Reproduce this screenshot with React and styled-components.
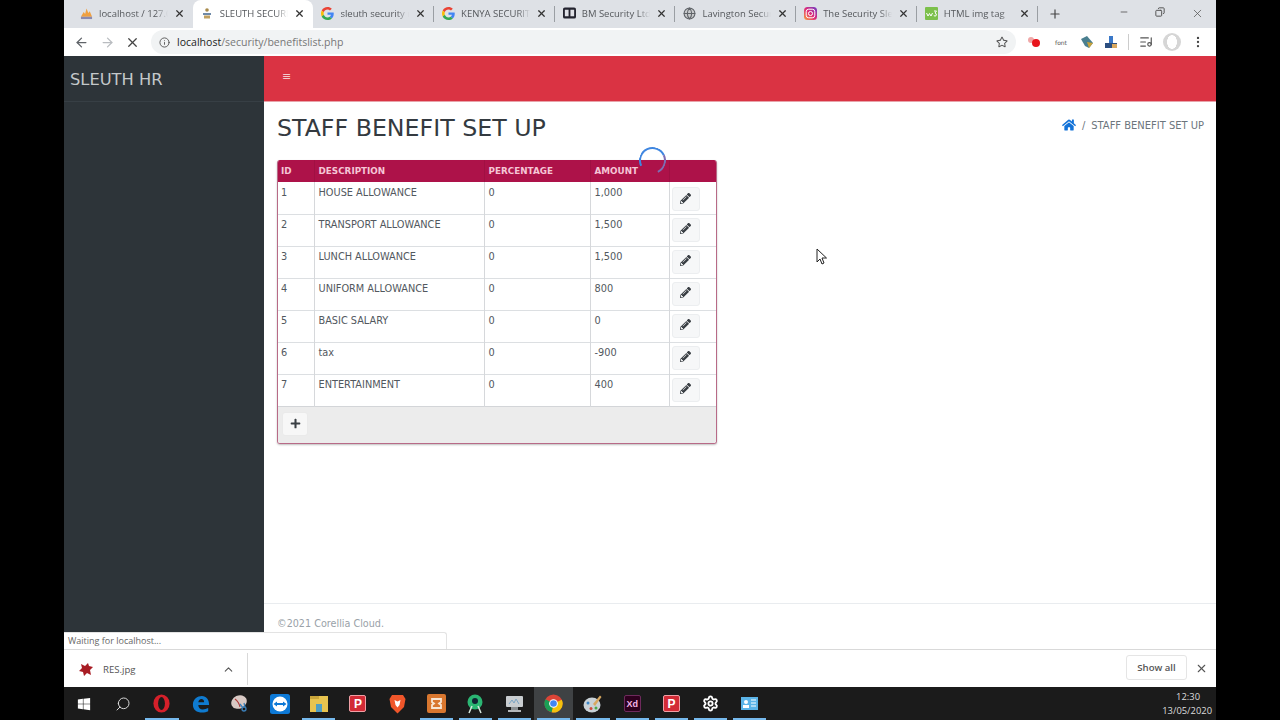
import React from "react";
import styled, { createGlobalStyle } from "styled-components";
import { FaHome, FaPencilAlt, FaPlus, FaRegStar, FaWindows } from "react-icons/fa";
import { ArrowLeft, ArrowRight, X, Info, Search, ChevronUp, Settings, MoreVertical, Plus, Minus, Copy, ListMusic, Globe } from "lucide-react";

const Global = createGlobalStyle`
  html, body { margin: 0; padding: 0; background: #000; }
  * { box-sizing: border-box; }
`;

const Stage = styled.div`
  width: 1280px;
  height: 720px;
  padding: 0 64px;
  background: #000;
  overflow: hidden;
`;
const Screen = styled.div`
  position: relative;
  width: 1152px;
  height: 720px;
  display: flex;
  flex-direction: column;
  background: #fff;
  font-family: "DejaVu Sans", sans-serif;
`;

/* browser chrome */
const TabStrip = styled.div`
  height: 28px;
  flex: none;
  display: flex;
  align-items: stretch;
  padding-left: 8px;
  background: #dee1e6;
  font-family: "Open Sans", sans-serif;
`;
const Tab = styled.div`
  width: 120.7px;
  flex: none;
  display: flex;
  align-items: center;
  gap: 6px;
  padding: 0 8px 2px 8px;
  border-radius: 8px 8px 0 0;
  background: ${(p) => (p.$active ? "#fff" : "transparent")};
  position: relative;
  &::after {
    content: "";
    display: ${(p) => (p.$sep ? "block" : "none")};
    position: absolute;
    right: 0;
    top: 6px;
    height: 16px;
    width: 1px;
    background: #9a9ea3;
  }
`;
const Favicon = styled.span`
  width: 13px;
  height: 13px;
  flex: none;
  display: flex;
  align-items: center;
  justify-content: center;
`;
const TabTitle = styled.span`
  flex: 1;
  min-width: 0;
  overflow: hidden;
  white-space: nowrap;
  font-size: 9.5px;
  color: #55585c;
  -webkit-mask-image: linear-gradient(90deg, #000 82%, transparent 100%);
  mask-image: linear-gradient(90deg, #000 82%, transparent 100%);
`;
const TabClose = styled(X)`
  flex: none;
  width: 11px;
  height: 11px;
  color: #333;
  stroke-width: 2.6;
`;
const NewTab = styled.div`
  width: 20px;
  margin-left: 7px;
  display: flex;
  align-items: center;
  justify-content: center;
  color: #444;
`;
const WindowControls = styled.div`
  margin-left: auto;
  display: flex;
  align-items: flex-start;
  padding-top: 7px;
  padding-right: 12px;
  gap: 26px;
  color: #555;
`;
const Toolbar = styled.div`
  height: 28px;
  flex: none;
  display: flex;
  align-items: center;
  padding: 0 10px 0 5px;
  background: #fff;
  color: #5f6368;
`;
const NavButton = styled.div`
  width: 25.5px;
  flex: none;
  display: flex;
  align-items: center;
  justify-content: center;
  color: ${(p) => p.$color || "#5f6368"};
`;
const Omnibox = styled.div`
  width: 865px;
  height: 24px;
  margin-left: 5.5px;
  display: flex;
  align-items: center;
  gap: 7px;
  padding: 0 8px;
  border-radius: 12px;
  background: #f1f3f4;
  font-family: "Open Sans", sans-serif;
  font-size: 10.55px;
  color: #777;
`;
const Url = styled.span`
  flex: 1;
  b { font-weight: 400; color: #222; }
`;
const Extensions = styled.div`
  flex: 1;
  display: flex;
  align-items: center;
  gap: 10px;
  padding: 0 0 0 11px;
`;
const FontExt = styled.span`
  width: 12px;
  margin: 0 3px;
  text-align: center;
  font-size: 6px;
  color: #555;
`;
const Divider = styled.span`
  width: 1px;
  height: 16px;
  background: #ccc;
`;
const Avatar = styled.span`
  width: 18px;
  height: 18px;
  border-radius: 50%;
  background: radial-gradient(ellipse 5px 7px at 50% 50%, #fff 95%, #d6d6d6 100%);
`;

/* page */
const Page = styled.div`
  flex: 1;
  min-height: 0;
  display: grid;
  grid-template-columns: 200px 1fr;
`;
const Sidebar = styled.aside`
  background: #2d3439;
`;
const Brand = styled.div`
  height: 46px;
  padding: 1px 0 0 6px;
  display: flex;
  align-items: center;
  font-size: 16.3px;
  color: #c4c8ca;
  border-bottom: 1px solid #373f45;
`;
const Main = styled.main`
  display: flex;
  flex-direction: column;
  min-width: 0;
`;
const TopBar = styled.div`
  height: 46px;
  flex: none;
  padding: 13px 0 0 18px;
  background: #da3343;
  color: #f3c9cd;
  border-bottom: 1px solid #e8a3aa;
  font-size: 11px;
  line-height: 16px;
`;
const Content = styled.div`
  flex: 1;
  padding: 0 12px 0 13px;
`;
const TitleRow = styled.div`
  height: 58px;
  display: flex;
  align-items: flex-start;
  justify-content: space-between;
`;
const Title = styled.h1`
  margin: 12px 0 0;
  font-size: 23.7px;
  font-weight: 400;
  line-height: 29px;
  color: #343a40;
`;
const Crumbs = styled.div`
  margin-top: 16px;
  display: flex;
  align-items: center;
  gap: 6px;
  font-size: 9.95px;
  color: #6c757d;
  svg { color: #1272d8; font-size: 14px; }
`;
const Card = styled.div`
  width: 440px;
  border: 1px solid #b86a87;
  border-top: none;
  border-radius: 3px;
  box-shadow: 0 1px 2px rgba(0, 0, 0, 0.25);
  overflow: hidden;
`;
const Table = styled.table`
  width: 100%;
  table-layout: fixed;
  border-collapse: collapse;
  font-size: 9.75px;
  color: #52585e;
`;
const Th = styled.th`
  height: 22px;
  padding: 0 3px 0 4px;
  background: #ad1249;
  color: #f5c6d6;
  font-size: 8.8px;
  font-weight: 700;
  text-align: left;
  border-right: 1px solid #a01043;
  &:first-child { padding-left: 3px; }
  &:last-child { border-right: none; }
`;
const Tr = styled.tr`
  height: 32px;
  border-bottom: 1px solid #dcdfe2;
  &:last-child { border-bottom: 1px solid #d3d5d8; }
`;
const Td = styled.td`
  padding: 4px 3px 0 4px;
  vertical-align: top;
  line-height: 12px;
  border-right: 1px solid #d6d8db;
  tr:first-child > & { padding-top: 5px; }
  &:first-child { padding-left: 3px; }
  &:last-child { border-right: none; padding: 3px 0 0 2px; }
`;
const EditButton = styled.div`
  width: 28px;
  height: 24px;
  display: flex;
  align-items: center;
  justify-content: center;
  padding-bottom: 2px;
  background: #f6f7f8;
  border: 1px solid #eceef0;
  border-radius: 3px;
  color: #3a3f44;
  font-size: 11px;
`;
const CardFooter = styled.div`
  height: 36px;
  padding: 5px 0 0 4px;
  background: #ececec;
`;
const AddButton = styled.div`
  width: 26px;
  height: 24px;
  display: flex;
  align-items: center;
  justify-content: center;
  background: #f7f7f7;
  border: 1px solid #eaeaea;
  border-radius: 3px;
  color: #3a3f44;
  font-size: 11px;
`;
const PageFooter = styled.footer`
  height: 46px;
  flex: none;
  padding: 13px 0 0 13px;
  border-top: 1px solid #e9ecef;
  font-size: 9.65px;
  line-height: 13px;
  color: #99a1a8;
`;
const Spinner = styled.div`
  position: absolute;
  left: 575px;
  top: 147px;
  width: 27px;
  height: 27px;
  border-radius: 50%;
  border: 2px solid transparent;
  border-top-color: #3f86e0;
  border-left-color: #3f86e0;
  border-right-color: #7d6fb4;
  transform: rotate(20deg);
`;
const Cursor = styled.svg`
  position: absolute;
  left: 752px;
  top: 248px;
`;
const StatusBubble = styled.div`
  position: absolute;
  left: 0;
  top: 632px;
  width: 383px;
  height: 17px;
  padding-left: 4px;
  background: #fff;
  border: 1px solid #e3e3e3;
  border-left: none;
  border-bottom: none;
  border-radius: 0 3px 0 0;
  font-family: "Open Sans", sans-serif;
  font-size: 9px;
  line-height: 16px;
  color: #666;
`;

/* download shelf */
const Shelf = styled.div`
  height: 38px;
  flex: none;
  display: flex;
  align-items: center;
  border-top: 1px solid #d9d9d9;
  background: #fff;
  font-family: "Open Sans", sans-serif;
`;
const Download = styled.div`
  width: 184px;
  height: 32px;
  display: flex;
  align-items: center;
  gap: 10px;
  padding: 1px 12px 0 15px;
  border-right: 1px solid #d9d9d9;
  font-size: 9.6px;
  color: #555;
`;
const FileName = styled.span`
  flex: 1;
`;
const ShowAll = styled.div`
  margin-left: auto;
  margin-top: -2px;
  width: 61px;
  height: 25px;
  display: flex;
  align-items: center;
  justify-content: center;
  border: 1px solid #e5e5e5;
  border-radius: 3px;
  font-size: 9.6px;
  font-weight: 600;
  color: #555;
`;
const ShelfClose = styled.div`
  width: 29px;
  display: flex;
  justify-content: center;
  color: #555;
`;

/* windows taskbar */
const Taskbar = styled.div`
  height: 33px;
  flex: none;
  display: flex;
  background: #1b1b1b;
`;
const Slot = styled.div`
  position: relative;
  width: 39.2px;
  flex: none;
  height: 33px;
  display: flex;
  align-items: center;
  justify-content: center;
  background: ${(p) => (p.$active ? "#3f4244" : "transparent")};
  &::after {
    content: "";
    display: ${(p) => (p.$running ? "block" : "none")};
    position: absolute;
    left: 3px;
    right: 3px;
    bottom: 0;
    height: 2px;
    background: #76b9ed;
  }
`;
const Clock = styled.div`
  margin-left: auto;
  padding: 3px 4px 0 0;
  font-family: "Open Sans", sans-serif;
  font-size: 9.4px;
  line-height: 14px;
  text-align: right;
  color: #dcdcdc;
  span { display: block; padding-right: 12px; }
`;
const LetterIcon = styled.span`
  width: 17px;
  height: 17px;
  display: flex;
  align-items: center;
  justify-content: center;
  border-radius: 2px;
  font-family: "Liberation Sans", sans-serif;
  font-size: ${(p) => p.$size || 11}px;
  font-weight: 700;
  color: ${(p) => p.$color};
  background: ${(p) => p.$bg};
  border: 1.5px solid ${(p) => p.$border || "transparent"};
`;

const GoogleG = () => (
  <svg width="13" height="13" viewBox="0 0 48 48">
    <path fill="#ea4335" d="M24 9.5c3.5 0 6.700 1.300 9.100 3.500l6.800-6.800C35.800 2.400 30.300 0 24 0 14.600 0 6.500 5.400 2.600 13.200l7.900 6.100C12.400 13.600 17.700 9.500 24 9.500z" />
    <path fill="#4285f4" d="M47 24.500c0-1.600-.2-3.100-.4-4.500H24v9h12.900c-.6 3-2.200 5.400-4.700 7.100l7.700 6C44.400 37.900 47 31.800 47 24.500z" />
    <path fill="#fbbc05" d="M10.500 28.700c-.5-1.400-.8-3-.8-4.700s.3-3.300.8-4.700l-7.900-6.100C.9 16.500 0 20.100 0 24s.9 7.500 2.600 10.800l7.900-6.100z" />
    <path fill="#34a853" d="M24 48c6.500 0 11.900-2.100 15.900-5.800l-7.700-6c-2.100 1.400-4.900 2.300-8.200 2.300-6.300 0-11.600-4.200-13.500-9.800l-7.900 6.100C6.500 42.600 14.600 48 24 48z" />
  </svg>
);
const PmaIcon = () => (
  <svg width="14" height="13" viewBox="0 0 14 13">
    <path d="M1 10 L4 5 L5.500 7 L7 1 L9 6 L10.500 4 L13 10 Z" fill="#f0a040" />
    <rect x="1" y="10" width="12" height="2.500" fill="#8a8ab0" />
  </svg>
);
const SleuthIcon = () => (
  <svg width="12" height="13" viewBox="0 0 12 13">
    <circle cx="6" cy="3" r="1.800" fill="#a88a4a" />
    <rect x="2" y="6" width="8" height="2" fill="#6f8aa8" />
    <rect x="3" y="8.500" width="6" height="3" fill="#c0a060" />
  </svg>
);
const BmIcon = () => (
  <svg width="14" height="12" viewBox="0 0 14 12">
    <rect width="14" height="12" rx="2" fill="#23232e" />
    <rect x="2" y="2.500" width="4" height="7" fill="#dfe0e6" />
    <rect x="8" y="2.500" width="4" height="7" fill="#dfe0e6" />
  </svg>
);
const InstaIcon = () => (
  <svg width="13" height="13" viewBox="0 0 13 13">
    <defs>
      <linearGradient id="ig" x1="0" y1="1" x2="1" y2="0">
        <stop offset="0" stopColor="#f9a13a" />
        <stop offset="0.5" stopColor="#dd2a7b" />
        <stop offset="1" stopColor="#6a3dc8" />
      </linearGradient>
    </defs>
    <rect width="13" height="13" rx="3.500" fill="url(#ig)" />
    <rect x="2.200" y="2.200" width="8.600" height="8.600" rx="2.500" fill="none" stroke="#fff" strokeWidth="1" />
    <circle cx="6.500" cy="6.500" r="2" fill="none" stroke="#fff" strokeWidth="1" />
  </svg>
);
const W3Icon = () => (
  <svg width="13" height="13" viewBox="0 0 13 13">
    <rect width="13" height="13" rx="1" fill="#7cc04b" />
    <path d="M1.500 6 L3 9 L4.500 6.500 L6 9 L7.500 6" fill="none" stroke="#fff" strokeWidth="1" />
    <path d="M9 4 H11.500 L10 6 Q12 6.500 11.200 8.500 Q10 9.800 8.800 8.500" fill="none" stroke="#fff" strokeWidth="1" />
  </svg>
);

const tabs = [
  { title: "localhost / 127.0.0.1", icon: <PmaIcon /> },
  { title: "SLEUTH SECURITY", icon: <SleuthIcon />, active: true },
  { title: "sleuth security nairobi", icon: <GoogleG />, sep: true },
  { title: "KENYA SECURITY FIRMS", icon: <GoogleG />, sep: true },
  { title: "BM Security Ltd Kenya", icon: <BmIcon />, sep: true },
  { title: "Lavington Security", icon: <Globe size={13} color="#5f6368" fill="#c8cacc" />, sep: true },
  { title: "The Security Sleuth", icon: <InstaIcon />, sep: true },
  { title: "HTML img tag", icon: <W3Icon />, sep: true },
];

const rows = [
  [1, "HOUSE ALLOWANCE", 0, "1,000"],
  [2, "TRANSPORT ALLOWANCE", 0, "1,500"],
  [3, "LUNCH ALLOWANCE", 0, "1,500"],
  [4, "UNIFORM ALLOWANCE", 0, "800"],
  [5, "BASIC SALARY", 0, "0"],
  [6, "tax", 0, "-900"],
  [7, "ENTERTAINMENT", 0, "400"],
];

const ChromeIcon = () => (
  <svg width="19" height="19" viewBox="0 0 20 20">
    <circle cx="10" cy="10" r="9.500" fill="#dc4437" />
    <path d="M10 10 L18.700 6 A9.500 9.500 0 0 1 8 19.300 Z" fill="#f4c20d" />
    <path d="M10 10 L8 19.300 A9.500 9.500 0 0 1 1.500 5.500 Z" fill="#1a9f55" />
    <circle cx="10" cy="10" r="4.600" fill="#fff" />
    <circle cx="10" cy="10" r="3.500" fill="#4285f4" />
  </svg>
);

const taskIcons = [
  { icon: <FaWindows size={14} color="#fff" /> },
  { icon: <Search size={16} strokeWidth={1.5} color="#d8d8d8" style={{ transform: "scaleX(-1)" }} /> },
  {
    icon: (
      <svg width="19" height="19" viewBox="0 0 20 20">
        <ellipse cx="10" cy="10" rx="8.500" ry="9.500" fill="#d5202a" />
        <ellipse cx="10" cy="10" rx="3.600" ry="6.800" fill="#1b1b1b" />
      </svg>
    ),
    running: true,
  },
  {
    icon: (
      <svg width="18" height="18" viewBox="0 0 20 20">
        <path d="M1 11 C1 4 6 1 11 1 C16 1 19 5 19 11 H7 C7 14 9 16 12 16 C14 16 16 15.500 18 14.500 V18 C16 19 14 19.500 11.500 19.500 C5 19.500 1 16 1 11 Z M7 8 H13.500 C13.500 5.500 12 4.500 10.500 4.500 C8.500 4.500 7.300 6 7 8 Z" fill="#0f7bd0" fillRule="evenodd" />
      </svg>
    ),
  },
  {
    icon: (
      <svg width="20" height="19" viewBox="0 0 20 19">
        <ellipse cx="9" cy="8" rx="8" ry="6.500" fill="#d8c9c4" transform="rotate(-25 9 8)" />
        <path d="M5 5 Q9 8 10 13" stroke="#b03a3a" fill="none" strokeWidth="1.200" />
        <circle cx="14" cy="15" r="2" fill="none" stroke="#3b7fb8" strokeWidth="1.300" />
        <path d="M10 10 L13 14 M14 9 L15 13" stroke="#3b7fb8" strokeWidth="1.300" />
      </svg>
    ),
  },
  {
    icon: (
      <svg width="20" height="20" viewBox="0 0 20 20">
        <rect width="20" height="20" rx="2.500" fill="#0d79d6" />
        <circle cx="10" cy="10" r="7.500" fill="#fff" />
        <path d="M3.500 10 L7 7.500 V9 H13 V7.500 L16.500 10 L13 12.500 V11 H7 V12.500 Z" fill="#0d79d6" />
      </svg>
    ),
  },
  {
    icon: (
      <svg width="18" height="16" viewBox="0 0 18 16">
        <rect width="18" height="16" fill="#e8c44f" />
        <rect y="0" width="9" height="3" fill="#c9a53a" />
        <rect x="6" y="8" width="6" height="8" fill="#4f9fc4" />
      </svg>
    ),
    running: true,
  },
  { icon: <LetterIcon $color="#fff" $bg="#d22b36" $border="#f0a0a6" $size={12}>P</LetterIcon> },
  {
    icon: (
      <svg width="17" height="20" viewBox="0 0 17 20">
        <path d="M3 1 H14 L16.500 5 L15 13 L8.500 19.500 L2 13 L0.500 5 Z" fill="#f0562a" />
        <path d="M5.500 6 L8.500 7.500 L11.500 6 L10.500 11 L8.500 13.500 L6.500 11 Z" fill="#fff" />
      </svg>
    ),
  },
  {
    icon: (
      <svg width="19" height="19" viewBox="0 0 19 19">
        <rect width="19" height="19" rx="2" fill="#d9772f" />
        <path d="M5 5 H14 V8 L12 9.500 L14 11 V14 H5 V11 L7 9.500 L5 8 Z" fill="none" stroke="#f8e6d4" strokeWidth="1.800" />
      </svg>
    ),
    running: true,
  },
  {
    icon: (
      <svg width="18" height="20" viewBox="0 0 18 20">
        <circle cx="9" cy="8" r="7.500" fill="#2bb673" />
        <circle cx="9" cy="7" r="3" fill="#123" />
        <path d="M6 12 L3 19 M12 12 L15 19" stroke="#d8e8de" strokeWidth="1.500" />
      </svg>
    ),
    running: true,
  },
  {
    icon: (
      <svg width="19" height="18" viewBox="0 0 19 18">
        <rect x="1" y="1" width="17" height="11" rx="1" fill="#c9cdd0" />
        <path d="M4 9 L7 5 L9 8 L11 4 L14 9" stroke="#7ba4c4" fill="none" />
        <rect x="6" y="12" width="7" height="3" fill="#8b8f92" />
        <rect x="3" y="15" width="13" height="2" fill="#b5b8ba" />
      </svg>
    ),
    running: true,
  },
  { icon: <ChromeIcon />, active: true, running: true },
  {
    icon: (
      <svg width="20" height="20" viewBox="0 0 20 20">
        <ellipse cx="9" cy="11" rx="8.500" ry="7.500" fill="#c9d1d6" />
        <circle cx="5" cy="9" r="1.500" fill="#3b86c8" />
        <circle cx="8" cy="14.500" r="1.500" fill="#d04a3a" />
        <circle cx="13" cy="14" r="1.500" fill="#4aa84a" />
        <path d="M10 10 L17 1.500 L18.500 3 L12 12 Z" fill="#d8a860" />
      </svg>
    ),
    running: true,
  },
  { icon: <LetterIcon $color="#f4b6e6" $bg="#2e001e" $border="#6e2a5c" $size={9}>Xd</LetterIcon>, running: true },
  { icon: <LetterIcon $color="#fff" $bg="#d22b36" $border="#f0a0a6" $size={12}>P</LetterIcon>, running: true },
  { icon: <Settings size={17} color="#fff" strokeWidth={2.6} />, running: true },
  {
    icon: (
      <svg width="17" height="13" viewBox="0 0 17 13">
        <rect width="17" height="13" fill="#5bb4e8" />
        <circle cx="5" cy="5" r="2" fill="#fff" />
        <rect x="2" y="8" width="6" height="3" fill="#fff" />
        <path d="M10 3 H15 M10 6 H15 M10 9 H15" stroke="#fff" />
      </svg>
    ),
    running: true,
  },
];

export default function App() {
  return (
    <Stage>
      <Global />
      <Screen>
        <TabStrip>
          {tabs.map((t) => (
            <Tab key={t.title} $active={t.active} $sep={t.sep}>
              <Favicon>{t.icon}</Favicon>
              <TabTitle>{t.title}</TabTitle>
              <TabClose />
            </Tab>
          ))}
          <NewTab><Plus size={14} strokeWidth={2} /></NewTab>
          <WindowControls>
            <Minus size={10} />
            <Copy size={10} strokeWidth={2.4} style={{ transform: "scaleX(-1)" }} />
            <X size={13} strokeWidth={1.4} />
          </WindowControls>
        </TabStrip>

        <Toolbar>
          <NavButton><ArrowLeft size={15} /></NavButton>
          <NavButton $color="#b9bcc0"><ArrowRight size={15} /></NavButton>
          <NavButton $color="#444"><X size={15} /></NavButton>
          <Omnibox>
            <Info size={11} color="#555" />
            <Url><b>localhost</b>/security/benefitslist.php</Url>
            <FaRegStar size={12} color="#555" />
          </Omnibox>
          <Extensions>
            <svg width="15" height="12" viewBox="0 0 15 12">
              <circle cx="4" cy="4" r="3" fill="#f0a8a8" />
              <circle cx="9" cy="7" r="4" fill="#e8141c" />
            </svg>
            <FontExt>font</FontExt>
            <svg width="14" height="14" viewBox="0 0 14 14">
              <path d="M1 4 L7 1 L13 8 L9 13 L5 11 Z" fill="#4a7f8f" />
              <path d="M7 7 L13 8 L9 13 Z" fill="#c9a23a" />
            </svg>
            <svg width="14" height="14" viewBox="0 0 14 14">
              <rect x="5" y="1" width="4" height="7" fill="#3a78c8" />
              <rect x="1" y="8" width="12" height="5" fill="#2c4f80" />
              <rect x="8" y="9" width="5" height="4" fill="#d8a860" />
            </svg>
            <Divider />
            <ListMusic size={14} color="#555" />
            <Avatar />
            <MoreVertical size={14} color="#444" />
          </Extensions>
        </Toolbar>

        <Page>
          <Sidebar>
            <Brand>SLEUTH HR</Brand>
          </Sidebar>
          <Main>
            <TopBar>≡</TopBar>
            <Content>
              <TitleRow>
                <Title>STAFF BENEFIT SET UP</Title>
                <Crumbs>
                  <FaHome />
                  <span>/</span>
                  <span>STAFF BENEFIT SET UP</span>
                </Crumbs>
              </TitleRow>
              <Card>
                <Table>
                  <colgroup>
                    <col style={{ width: 36 }} />
                    <col style={{ width: 170 }} />
                    <col style={{ width: 106 }} />
                    <col style={{ width: 79 }} />
                    <col />
                  </colgroup>
                  <thead>
                    <tr>
                      <Th>ID</Th>
                      <Th>DESCRIPTION</Th>
                      <Th>PERCENTAGE</Th>
                      <Th>AMOUNT</Th>
                      <Th />
                    </tr>
                  </thead>
                  <tbody>
                    {rows.map((r) => (
                      <Tr key={r[0]}>
                        <Td>{r[0]}</Td>
                        <Td>{r[1]}</Td>
                        <Td>{r[2]}</Td>
                        <Td>{r[3]}</Td>
                        <Td><EditButton><FaPencilAlt /></EditButton></Td>
                      </Tr>
                    ))}
                  </tbody>
                </Table>
                <CardFooter>
                  <AddButton><FaPlus /></AddButton>
                </CardFooter>
              </Card>
            </Content>
            <PageFooter>©2021 Corellia Cloud.</PageFooter>
          </Main>
        </Page>

        <Shelf>
          <Download>
            <svg width="14" height="13" viewBox="0 0 14 13">
              <path d="M2 1 L6 3 L9 0 L10 3 L14 4 L11 7 L12 12 L8 10 L5 13 L4 9 L0 8 L3 5 Z" fill="#a81c24" />
            </svg>
            <FileName>RES.jpg</FileName>
            <ChevronUp size={13} color="#555" />
          </Download>
          <ShowAll>Show all</ShowAll>
          <ShelfClose><X size={13} /></ShelfClose>
        </Shelf>

        <Taskbar>
          {taskIcons.map((t, i) => (
            <Slot key={i} $active={t.active} $running={t.running}>{t.icon}</Slot>
          ))}
          <Clock>
            <span>12:30</span>
            13/05/2020
          </Clock>
        </Taskbar>

        <Spinner />
        <Cursor width="12" height="17" viewBox="0 0 12 17">
          <path d="M1 1 V14 L4 11 L6 16 L8 15 L6 10 L10.500 10 Z" fill="#fff" stroke="#222" strokeWidth="1" />
        </Cursor>
        <StatusBubble>Waiting for localhost...</StatusBubble>
      </Screen>
    </Stage>
  );
}
